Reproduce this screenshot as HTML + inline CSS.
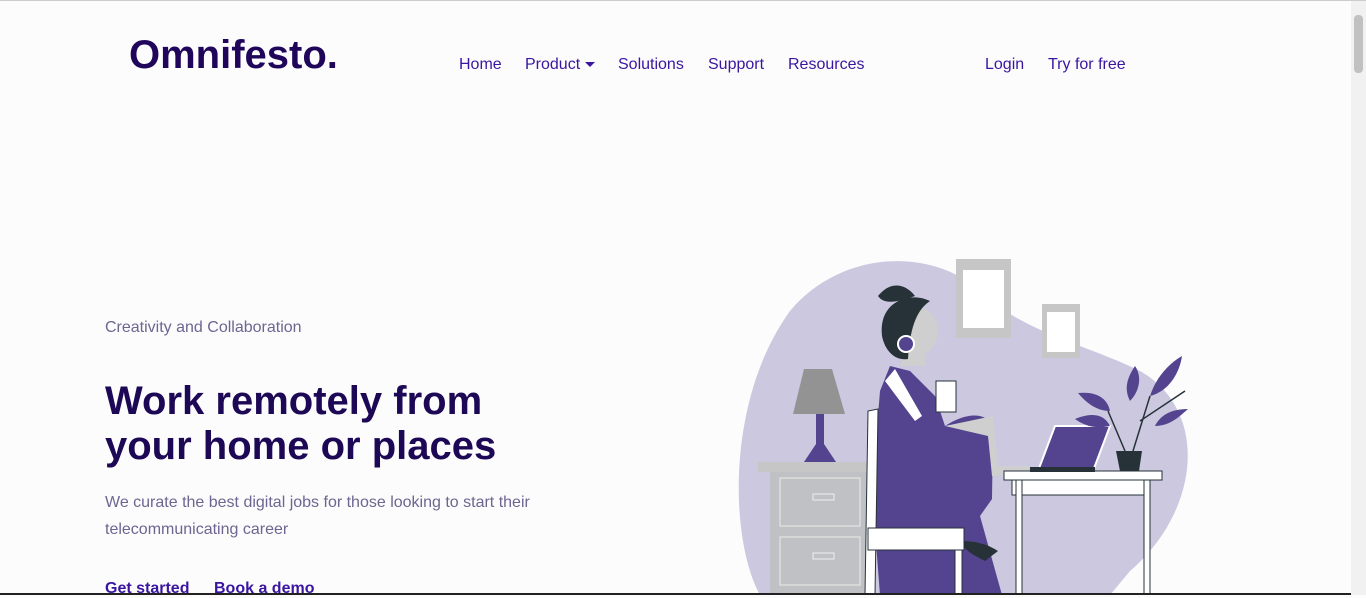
<!DOCTYPE html>
<html><head><meta charset="utf-8"><style>
body{margin:0;width:1366px;height:594px;overflow:hidden;background:#fcfcfd;font-family:"Liberation Sans",sans-serif;position:relative;border-top:1px solid #ccc;box-sizing:border-box}
.a{position:absolute;white-space:nowrap}
.logo{left:129px;top:32px;font-size:40px;font-weight:bold;color:#20065a}
.nav{top:55px;font-size:16px;color:#3a16a0}
.sb{position:absolute;right:0;top:0;width:15px;height:594px;background:#f1f1f1}
.sb i{position:absolute;left:3px;top:14px;width:9px;height:58px;background:#c1c1c1;border-radius:4px}
</style></head><body>
<div class="a logo">Omnifesto.</div>
<div class="a nav" style="left:459px">Home</div>
<div class="a nav" style="left:525px">Product <span style="display:inline-block;border:5px solid transparent;border-top:5px solid #3a16a0;border-bottom:0;vertical-align:middle"></span></div>
<div class="a nav" style="left:618px">Solutions</div>
<div class="a nav" style="left:708px">Support</div>
<div class="a nav" style="left:788px">Resources</div>
<div class="a nav" style="left:985px">Login</div>
<div class="a nav" style="left:1048px">Try for free</div>
<div class="a" style="left:105px;top:318px;font-size:16px;color:#6e6590">Creativity and Collaboration</div>
<div class="a" style="left:105px;top:378px;font-size:40px;font-weight:bold;color:#1d0855;line-height:45px">Work remotely from<br>your home or places</div>
<div class="a" style="left:105px;top:488px;font-size:16px;color:#6e6590;line-height:27px">We curate the best digital jobs for those looking to start their<br>telecommunicating career</div>
<div class="a" style="left:105px;top:579px;font-size:16px;font-weight:bold;color:#3a16a0">Get started</div>
<div class="a" style="left:214px;top:579px;font-size:16px;font-weight:bold;color:#3a16a0">Book a demo</div>
<svg class="a" style="left:730px;top:250px" width="480" height="344" viewBox="0 0 480 344">
<path d="M60 60 C110 0 200 -5 250 40 C290 80 360 95 410 120 C480 160 470 260 400 320 L380 344 L30 344 C0 290 -5 150 60 60Z" fill="#cbc8df"/>
<rect x="226" y="8" width="55" height="79" fill="#c6c6c6"/><rect x="233" y="19" width="41" height="58" fill="#fff"/>
<rect x="312" y="53" width="38" height="54" fill="#c6c6c6"/><rect x="317" y="61" width="28" height="40" fill="#fff"/>
<polygon points="74,118 102,118 115,163 63,163" fill="#939393"/>
<path d="M86 163h8v30l12 18h-32l12-18z" fill="#54438f"/>
<rect x="28" y="211" width="115" height="10" fill="#c6c6c6"/>
<rect x="40" y="221" width="100" height="123" fill="#bfc1c4"/>
<rect x="50" y="227" width="80" height="48" fill="none" stroke="#ddd" stroke-width="1.5"/>
<rect x="50" y="286" width="80" height="48" fill="none" stroke="#ddd" stroke-width="1.5"/>
<rect x="83" y="243" width="21" height="6" fill="none" stroke="#eee"/><rect x="83" y="302" width="21" height="6" fill="none" stroke="#eee"/>
<path d="M160 115 L150 140 L142 240 L150 344 L272 344 L250 265 L262 248 L263 175 C255 160 235 162 215 175 L205 145 L180 120Z" fill="#54438f"/>
<path d="M215 175 L263 165 L268 215 L300 215 L298 222 L262 225 L258 185Z" fill="#cfcfcf"/>
<path d="M230 290 C250 290 260 295 268 300 L255 310 C245 305 235 300 230 290Z" fill="#263238"/>
<polygon points="155,130 165,118 192,165 185,170" fill="#fff"/>
<path d="M170 115 L195 115 L195 90 L178 88Z" fill="#cfcfcf"/>
<circle cx="182" cy="80" r="26" fill="#cfcfcf"/>
<path d="M152 85 C148 50 180 40 200 50 C185 60 180 80 178 108 C165 110 155 100 152 85Z" fill="#263238"/>
<path d="M148 45 C160 30 175 32 185 45 C170 50 155 55 148 45Z" fill="#263238"/>
<circle cx="176" cy="93" r="8" fill="#54438f" stroke="#fff" stroke-width="2"/>
<rect x="206" y="130" width="20" height="31" fill="#fff" stroke="#263238"/>
<polygon points="148,158 138,160 135,344 145,344" fill="#fff" stroke="#263238"/>
<rect x="138" y="277" width="96" height="22" fill="#fff" stroke="#263238"/>
<rect x="225" y="299" width="7" height="45" fill="#fff" stroke="#263238"/>
<rect x="274" y="220" width="158" height="9" fill="#fff" stroke="#263238"/>
<rect x="282" y="229" width="138" height="15" fill="#fff" stroke="#263238"/>
<rect x="286" y="229" width="6" height="115" fill="#fff" stroke="#263238"/>
<rect x="414" y="229" width="6" height="115" fill="#fff" stroke="#263238"/>
<polygon points="325,175 380,175 363,220 308,220" fill="#54438f" stroke="#fff" stroke-width="2"/>
<rect x="300" y="216" width="65" height="5" fill="#263238"/>
<polygon points="386,200 412,200 409,220 390,220" fill="#263238"/>
<path d="M395 200 L378 160 M403 200 L420 145 M410 170 L455 140" stroke="#263238" stroke-width="1.5"/>
<path d="M348 142 C370 140 378 150 380 160 C365 160 355 150 348 142Z M345 168 C365 160 375 165 380 175 C365 178 355 175 345 168Z M400 150 C410 140 412 125 405 115 C395 130 395 140 400 150Z M420 145 C440 140 450 120 452 105 C435 115 425 130 420 145Z M425 175 C440 175 450 165 458 158 C440 158 430 165 425 175Z" fill="#54438f"/>
</svg>
<div class="a" style="left:0;top:592px;width:1351px;height:2px;background:#222"></div>
<div class="sb"><i></i></div>
</body></html>
